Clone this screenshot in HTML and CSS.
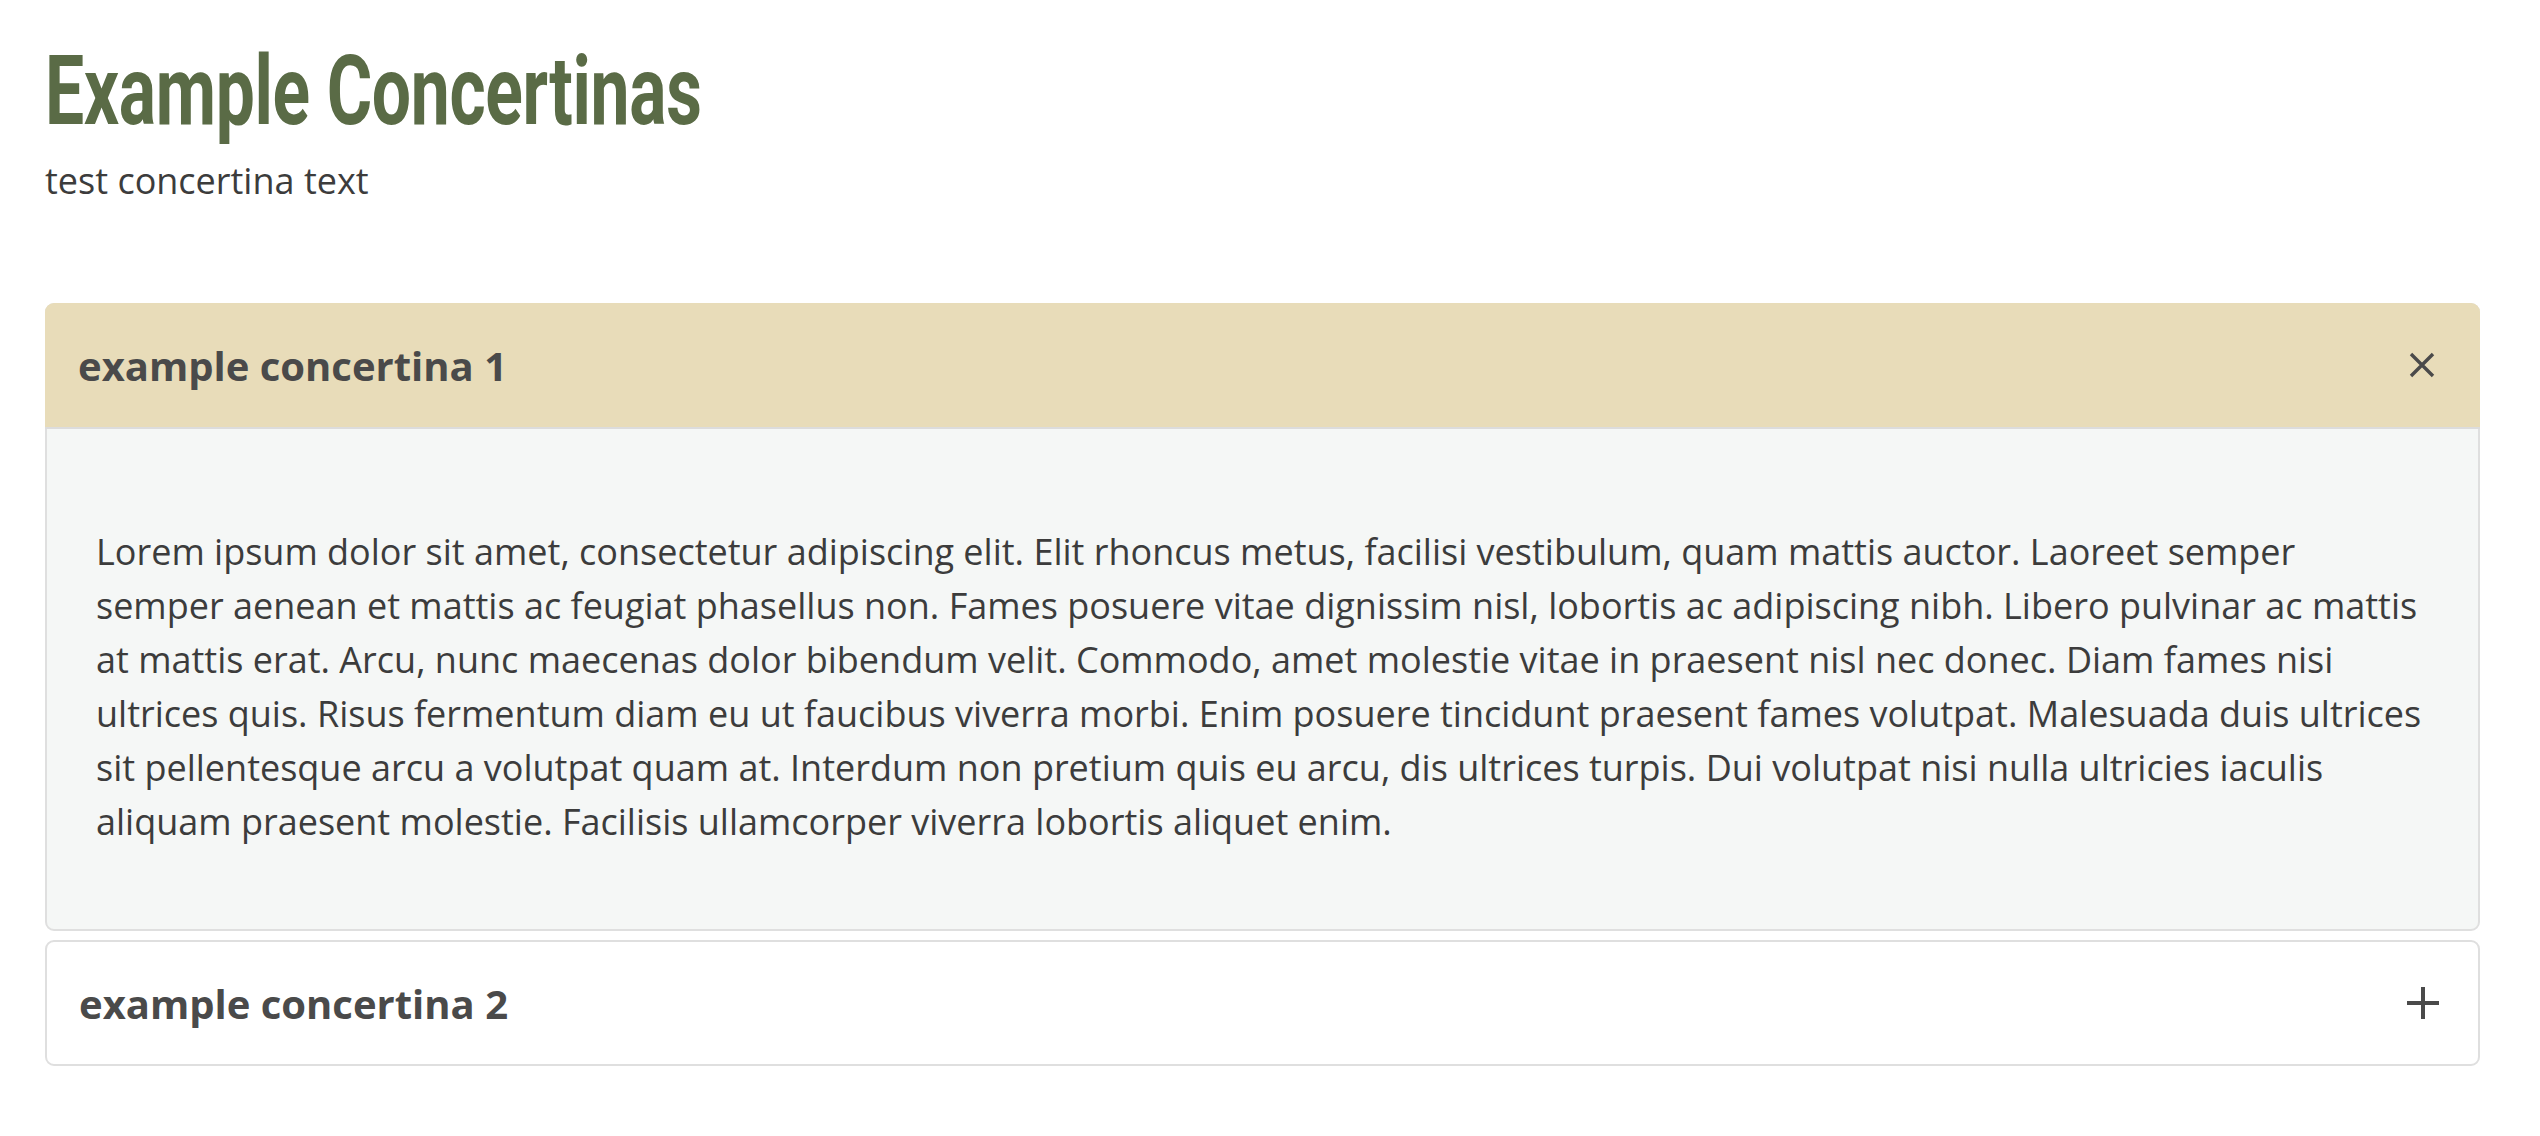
FILE: index.html
```html
<!DOCTYPE html>
<html lang="en">
<head>
<meta charset="utf-8">
<title>Example Concertinas</title>
<link rel="stylesheet" href="styles.css">
</head>
<body>
<main class="page">
  <h1 class="title"><span class="title-text">Example Concertinas</span></h1>
  <p class="intro">test concertina text</p>

  <section class="concertinas">
    <div class="card card-open">
      <div class="card-head">
        <h2 class="card-title">example concertina 1</h2>
        <svg class="icon" width="26" height="26" viewBox="0 0 26 26" aria-hidden="true">
          <path d="M2 2 L24 24 M24 2 L2 24" stroke="#4a4a4a" stroke-width="3.4" fill="none"/>
        </svg>
      </div>
      <div class="card-body">
        <p>Lorem ipsum dolor sit amet, consectetur adipiscing elit. Elit rhoncus metus, facilisi vestibulum, quam mattis auctor. Laoreet semper<br>semper aenean et mattis ac feugiat phasellus non. Fames posuere vitae dignissim nisl, lobortis ac adipiscing nibh. Libero pulvinar ac mattis<br>at mattis erat. Arcu, nunc maecenas dolor bibendum velit. Commodo, amet molestie vitae in praesent nisl nec donec. Diam fames nisi<br>ultrices quis. Risus fermentum diam eu ut faucibus viverra morbi. Enim posuere tincidunt praesent fames volutpat. Malesuada duis ultrices<br>sit pellentesque arcu a volutpat quam at. Interdum non pretium quis eu arcu, dis ultrices turpis. Dui volutpat nisi nulla ultricies iaculis<br>aliquam praesent molestie. Facilisis ullamcorper viverra lobortis aliquet enim.</p>
      </div>
    </div>

    <div class="card">
      <div class="card-head">
        <h2 class="card-title">example concertina 2</h2>
        <svg class="icon" width="32" height="32" viewBox="0 0 32 32" aria-hidden="true">
          <path d="M16 0 V32 M0 16 H32" stroke="#4a4a4a" stroke-width="4" fill="none"/>
        </svg>
      </div>
    </div>
  </section>
</main>
</body>
</html>
```

FILE: styles.css
```css
html, body {
  margin: 0;
  padding: 0;
  background: #ffffff;
}

.page {
  width: 2435px;
  margin-left: 45px;
  padding-top: 44px;
  font-family: "Open Sans", "Noto Sans", sans-serif;
  color: #3c3c3c;
}

.title {
  margin: 0;
  font-family: Roboto, "Liberation Sans", sans-serif;
  font-weight: 700;
  font-size: 96px;
  line-height: 94px;
  color: #5a6b46;
  white-space: nowrap;
}

.title-text {
  display: inline-block;
  transform: scaleX(0.725);
  transform-origin: left center;
  letter-spacing: -0.5px;
}

.intro {
  margin: 16px 0 0;
  font-size: 36px;
  line-height: 54px;
  color: #3c3c3c;
}

.concertinas {
  margin-top: 95px;
  display: flex;
  flex-direction: column;
  gap: 9px;
}

.card {
  border: 2px solid #dfdfdf;
  border-radius: 9px;
  background: #ffffff;
}

.card-head {
  height: 122px;
  display: flex;
  align-items: center;
  justify-content: space-between;
  padding: 0 39px 0 32px;
}

.card-open {
  background: #f5f7f6;
}

.card-open .card-head {
  margin: -2px -2px 0;
  height: 124px;
  padding: 0 45px 0 33px;
  background: #e8dcb9;
  border-radius: 9px 9px 0 0;
  border-bottom: 2px solid #dcdcdc;
}

.card-title {
  margin: 0;
  font-size: 40px;
  font-weight: 700;
  color: #4a4a4a;
}

.icon {
  display: block;
  flex: none;
}

.card-body {
  padding: 96px 20px 80px 49px;
}

.card-body p {
  margin: 0;
  font-size: 36px;
  line-height: 54px;
  color: #3c3c3c;
}
```
